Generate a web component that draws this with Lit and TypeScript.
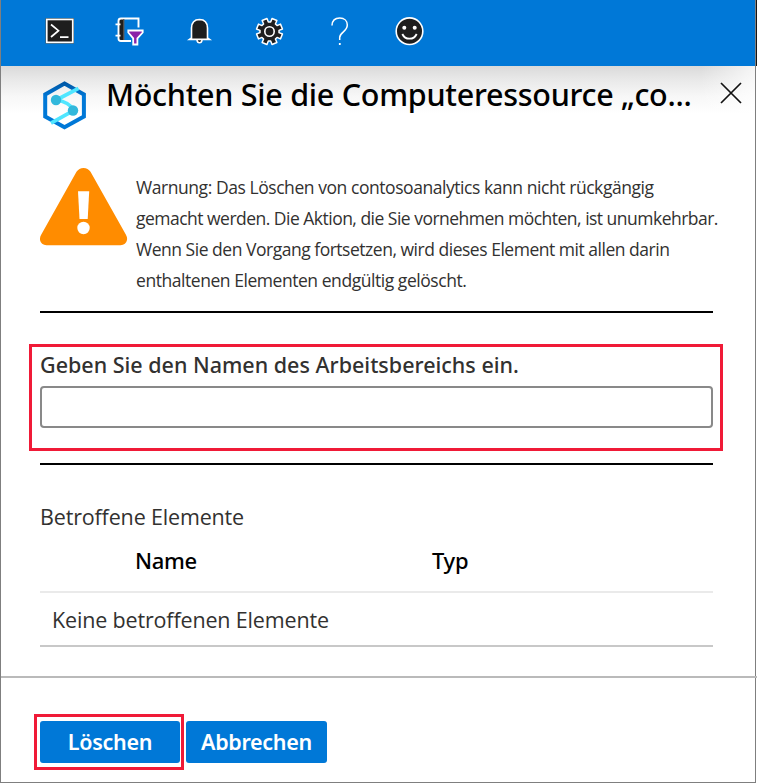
import { LitElement, html, css, svg } from "lit";
import { customElement, state } from "lit/decorators.js";

const gearPoints = () => {
  const pts: string[] = [];
  for (let i = 0; i < 8; i++) {
    const mid = (i * Math.PI) / 4 + Math.PI / 8;
    for (const [r, a] of [[9.6, -0.27], [13.2, -0.2], [13.2, 0.2], [9.6, 0.27]]) {
      pts.push(`${(14.5 + r * Math.cos(mid + a)).toFixed(2)},${(14.5 + r * Math.sin(mid + a)).toFixed(2)}`);
    }
  }
  return pts.join(" ");
};

const toolbarIcons = [
  {
    label: "Cloud Shell",
    art: svg`<rect x="0.5" y="1.2" width="28.5" height="25.4" fill="#5b5b55"/>
      <rect x="1.8" y="2.5" width="25.9" height="22.8" fill="#1e1e1e" stroke="#fff" stroke-width="1.6"/>
      <path d="M6 7.500 13.500 13.700 6 20M15 20.200H23.500" fill="none" stroke="#fff" stroke-width="1.7"/>`,
  },
  {
    label: "Verzeichnis und Abonnement",
    art: svg`<path d="M4 2h5v22H4z" fill="#1e1e1e"/>
      <path d="M23.500 10.500V1.500H6Q3.500 1.500 3.500 4V21.500Q3.500 24 6 24H16" fill="none" stroke="#fff" stroke-width="1.900"/>
      <path d="M8.800 2V23" stroke="#5f5b55" stroke-width="1.200"/>
      <path d="M.5 7.300H5.500M.5 18.600H5.500" stroke="#fff" stroke-width="1.800"/>
      <path d="M13.300 13.500H27.700V15.500L22.400 21.300V27.500H18.200V21.300L13.300 15.500Z" fill="#8a22a8" stroke="#fff" stroke-width="1.800"/>`,
  },
  {
    label: "Benachrichtigungen",
    art: svg`<path d="M12 23Q12.300 25.800 14.500 25.800T17 23" fill="#1e1e1e" stroke="#fff" stroke-width="1.600"/>
      <path d="M6.500 21V11Q6.700 2.600 14.500 2.500 22.300 2.600 22.500 11V21L24.500 22.400H4.500Z" fill="#1e1e1e" stroke="#fff" stroke-width="1.600"/>`,
  },
  {
    label: "Einstellungen",
    art: svg`<polygon points=${gearPoints()} fill="#1e1e1e" stroke="#fff" stroke-width="1.500" stroke-linejoin="round"/>
      <circle cx="14.500" cy="14.500" r="4.700" fill="#1e1e1e" stroke="#fff" stroke-width="1.600"/>`,
  },
  {
    label: "Hilfe",
    art: svg`<path d="M7 8.500C7.200 3.600 10.300 1 14.800 1S22.300 3.900 22.300 8.100C22.300 14.600 14.700 15.500 14.700 20.500V23" fill="none" stroke="#fff" stroke-width="1.500"/>
      <rect x="13.900" y="26" width="1.800" height="2" fill="#fff"/>`,
  },
  {
    label: "Feedback",
    art: svg`<circle cx="14.500" cy="14.200" r="13.300" fill="#1e1e1e" stroke="#fff" stroke-width="1.600"/>
      <circle cx="9.300" cy="10.700" r="2" fill="#fff"/><circle cx="19.700" cy="10.700" r="2" fill="#fff"/>
      <path d="M7.300 17Q9.500 21.700 14.500 21.700T21.700 17" fill="none" stroke="#fff" stroke-width="1.800"/>`,
  },
];

const warningLines = [
  "Warnung: Das Löschen von contosoanalytics kann nicht rückgängig",
  "gemacht werden. Die Aktion, die Sie vornehmen möchten, ist unumkehrbar.",
  "Wenn Sie den Vorgang fortsetzen, wird dieses Element mit allen darin",
  "enthaltenen Elementen endgültig gelöscht.",
];

@customElement("app-root")
export class AppRoot extends LitElement {
  @state() private workspace = "";

  static styles = css`
    * { box-sizing: border-box; }
    :host {
      display: block;
      width: 757px;
      height: 783px;
      overflow: hidden;
      background: linear-gradient(#151515 66px, #fff 66px);
      font-family: "Open Sans", "Noto Sans", sans-serif;
      font-size: 21.5px;
      color: #323130;
    }
    .window {
      width: 756px;
      height: 783px;
      display: flex;
      flex-direction: column;
      border: 1px solid #7f7f7f;
      border-top: 0;
      background: #fff;
    }
    .toolbar {
      flex: none;
      height: 66px;
      padding: 17px 0 0 43.500px;
      display: flex;
      gap: 41px;
      background: #0078d7;
    }
    .toolbar svg { width: 29px; height: 29px; display: block; }
    .head {
      flex: none;
      height: 102px;
      display: flex;
      padding-left: 41px;
      background:
        linear-gradient(90deg, transparent 700px, #fff 775px),
        linear-gradient(#dadada, #e9e9e9 14px, #f7f7f7 30px, #fff 48px);
    }
    .logo { flex: none; width: 46px; height: 50px; margin-top: 14px; }
    h1 {
      flex: none;
      margin: 7.500px 0 0 18px;
      width: 604px;
      font: 500 30.500px/40px "Noto Sans", sans-serif;
      letter-spacing: -0.27px;
      color: #000;
      white-space: nowrap;
    }
    .close { flex: none; width: 22px; height: 22px; margin: 16px 0 0 10px; }
    .warning { flex: none; height: 143px; display: flex; padding-left: 39px; }
    .triangle { flex: none; width: 88px; height: 78px; }
    .message {
      margin: 4px 0 0 8px;
      font-size: 17.500px;
      line-height: 31px;
      letter-spacing: -0.480px;
      white-space: nowrap;
    }
    .message :nth-child(1) { letter-spacing: -0.440px; }
    .message :nth-child(2) { letter-spacing: -0.515px; }
    .message :nth-child(4) { letter-spacing: -0.450px; }
    .rule { flex: none; height: 2px; margin: 0 42px 0 39px; background: #000; }
    .field {
      flex: none;
      width: 694px;
      height: 107px;
      margin: 31px 0 12px 28px;
      padding: 3px 7px 0 8px;
      border: 3px solid #f01a37;
    }
    label {
      display: block;
      height: 36px;
      font: 500 21.500px/30px "Noto Sans", sans-serif;
      white-space: nowrap;
    }
    input {
      display: block;
      width: 673px;
      height: 42px;
      padding: 0 8px;
      border: 2px solid #898989;
      border-radius: 4px;
      background: #fff;
      font: inherit;
      outline: none;
    }
    .affected { flex: none; margin: 37px 42px 29px 39px; line-height: 30px; letter-spacing: -0.160px; }
    .columns {
      display: grid;
      grid-template-columns: 297px 1fr;
      height: 49px;
      margin-top: 12px;
      padding: 1px 0 0 95px;
      border-bottom: 2px solid #eaeaea;
      font: 500 22px/30px "Noto Sans", sans-serif;
      letter-spacing: -0.300px;
      color: #000;
    }
    .empty { height: 54px; padding: 12px 0 0 12px; border-bottom: 2px solid #c8c8c8; }
    .footer {
      flex: none;
      width: 756px;
      padding: 36px 0 0 33px;
      display: flex;
      gap: 2px;
      border-top: 2px solid #bababa;
    }
    .outline { width: 150px; height: 56px; padding: 4px 3px; border: 3px solid #f01a37; }
    button {
      display: block;
      width: 140px;
      height: 42px;
      padding: 0;
      border: 0;
      border-radius: 3px;
      background: #0078d7;
      color: #fff;
      font: 600 21.500px/42px "Noto Sans", sans-serif;
      letter-spacing: -0.300px;
    }
    .cancel { width: 141px; margin-top: 7px; }
  `;

  render() {
    return html`
      <div class="window">
        <nav class="toolbar">
          ${toolbarIcons.map((i) => html`<svg viewBox="0 0 29 29" role="img" aria-label=${i.label}>${i.art}</svg>`)}
        </nav>
        <header class="head">
          <svg class="logo" viewBox="0 0 46 50">
            <defs>
              <linearGradient id="hex" x1="0" y1="0" x2="0" y2="1">
                <stop offset="0" stop-color="#0059a8"/><stop offset=".3" stop-color="#0078d7"/><stop offset="1" stop-color="#0078d7"/>
              </linearGradient>
            </defs>
            <path d="M22.500 3.500 41.900 14.400V36.600L22.500 47.200 3.200 36.600V14.400Z" fill="none" stroke="url(#hex)" stroke-width="4"/>
            <path d="M36.500 8.300 14.300 20 C24 21.500 29 25 31.800 30.300L9 43.200" fill="none" stroke="#50e6ff" stroke-width="3.700" stroke-linejoin="round"/>
            <circle cx="14" cy="20" r="5.200" fill="#32b8dc"/>
            <circle cx="31" cy="30.500" r="5.200" fill="#32b8dc"/>
          </svg>
          <h1>Möchten Sie die Computeressource „co...</h1>
          <svg class="close" viewBox="0 0 22 22"><path d="M1 1 21 21M21 1 1 21" stroke="#111" stroke-width="1.700"/></svg>
        </header>
        <section class="warning">
          <svg class="triangle" viewBox="0 0 88 78">
            <path d="M36.500 3.800Q39 0 43.500 0T50.500 3.800L85.800 66.500Q87.500 69.500 87 72 86 77 80.500 77.200H6.500Q1 77 0 72-.3 69 1.300 66.500Z" fill="#ff8c00"/>
            <path d="M38 23.300H49.200L47.700 51H39.500Z" fill="#fff"/><circle cx="43.500" cy="60" r="6.200" fill="#fff"/>
          </svg>
          <div class="message">${warningLines.map((l) => html`<div>${l}</div>`)}</div>
        </section>
        <div class="rule"></div>
        <section class="field">
          <label for="workspace">Geben Sie den Namen des Arbeitsbereichs ein.</label>
          <input id="workspace" .value=${this.workspace}
            @input=${(e: Event) => (this.workspace = (e.target as HTMLInputElement).value)} />
        </section>
        <div class="rule"></div>
        <section class="affected">
          <div>Betroffene Elemente</div>
          <div class="columns"><span>Name</span><span>Typ</span></div>
          <div class="empty">Keine betroffenen Elemente</div>
        </section>
        <footer class="footer">
          <div class="outline"><button>Löschen</button></div>
          <button class="cancel">Abbrechen</button>
        </footer>
      </div>
    `;
  }
}
